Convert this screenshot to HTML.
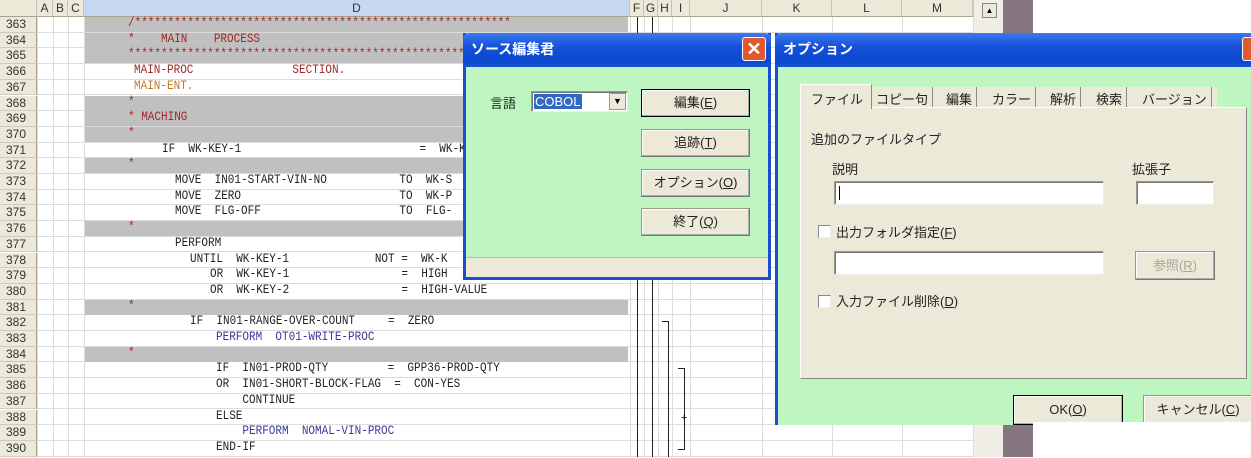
<!DOCTYPE html>
<html><head><meta charset="utf-8"><style>
*{margin:0;padding:0;box-sizing:border-box}
body{width:1251px;height:457px;overflow:hidden;background:#fff;position:relative;font-family:"Liberation Sans","Noto Sans CJK JP",sans-serif}
.a{position:absolute}
.hd{background:#ece9d8;border-right:1px solid #c8c4b4;border-bottom:1px solid #a8a490;font-size:12px;color:#333;text-align:center;line-height:17px;height:17px;top:0}
.rn{left:0;width:37px;background:#ece9d8;border-right:1px solid #a8a490;border-bottom:1px solid #d0ccbc;font-size:12px;color:#333;padding-left:6px;height:15.7px;line-height:15px}
.cell{border-bottom:1px solid #dcdcdc;height:15.7px}
.code{font-family:"Liberation Mono",monospace;font-size:11px;line-height:15px;white-space:pre;color:#222;height:15.7px;transform:scaleY(1.15);transform-origin:left center}
.r{color:#a02828}.o{color:#c07a2a}.b{color:#3a3a9a}
.vl{width:1px;background:#222}
.dlg{background:#bff5c0;border:3px solid #1b4fcf;border-top:none}
.tb{background:linear-gradient(#3b7bf0,#1550d8 40%,#0a48d0 85%,#1a55d0);color:#fff;font-weight:bold;font-size:14px;line-height:32px;padding-left:8px;font-family:"Liberation Sans","Noto Sans CJK JP",sans-serif}
.btn{background:#ece9d8;border:1px solid #9a9888;border-right-color:#777;border-bottom-color:#777;box-shadow:inset -1px -1px #aaa,inset 1px 1px #fff;font-size:13px;text-align:center;color:#222}
.inp{background:#fff;border:1px solid #9a9888;border-right-color:#eee;border-bottom-color:#eee;box-shadow:inset 1px 1px #777}
.t{font-size:13px;color:#222;white-space:nowrap}
.cb{width:13px;height:13px;background:#fff;border:1px solid #888;border-right-color:#eee;border-bottom-color:#eee}
</style></head><body>
<div class="a hd" style="left:0;width:37px"></div>
<div class="a hd" style="left:37px;width:16px">A</div>
<div class="a hd" style="left:53px;width:15px">B</div>
<div class="a hd" style="left:68px;width:16px">C</div>
<div class="a hd" style="left:84px;width:546px;background:#c6d7f0">D</div>
<div class="a hd" style="left:630px;width:14px">F</div>
<div class="a hd" style="left:644px;width:14px">G</div>
<div class="a hd" style="left:658px;width:14px">H</div>
<div class="a hd" style="left:672px;width:18px">I</div>
<div class="a hd" style="left:690px;width:72px">J</div>
<div class="a hd" style="left:762px;width:70px">K</div>
<div class="a hd" style="left:832px;width:70px">L</div>
<div class="a hd" style="left:902px;width:71px">M</div>
<div class="a" style="left:973px;top:0;width:30px;height:457px;background:#f0eee6;border-left:1px solid #ccc"></div>
<div class="a" style="left:982px;top:3px;width:15px;height:15px;background:#ece9d8;border:1px solid #888;font-size:8px;text-align:center;line-height:13px">▲</div>
<div class="a" style="left:1003px;top:0;width:30px;height:457px;background:#857680"></div>
<div id="grid"></div>
<script>
var rows=[
[363,1,'<span class="r">/*********************************************************</span>',128],
[364,1,'<span class="r">*    MAIN    PROCESS</span>',128],
[365,1,'<span class="r">**********************************************************</span>',128],
[366,0,'<span class="r">MAIN-PROC               SECTION.</span>',134],
[367,0,'<span class="o">MAIN-ENT.</span>',134],
[368,1,'<span class="r">*</span>',128],
[369,1,'<span class="r">* MACHING</span>',128],
[370,1,'<span class="r">*</span>',128],
[371,0,'IF  WK-KEY-1                           =  WK-K',162],
[372,1,'<span class="r">*</span>',128],
[373,0,'MOVE  IN01-START-VIN-NO           TO  WK-S',175],
[374,0,'MOVE  ZERO                        TO  WK-P',175],
[375,0,'MOVE  FLG-OFF                     TO  FLG-',175],
[376,1,'<span class="r">*</span>',128],
[377,0,'PERFORM',175],
[378,0,'UNTIL  WK-KEY-1             NOT =  WK-K',190],
[379,0,'OR  WK-KEY-1                 =  HIGH',210],
[380,0,'OR  WK-KEY-2                 =  HIGH-VALUE',210],
[381,1,'<span class="r">*</span>',128],
[382,0,'IF  IN01-RANGE-OVER-COUNT     =  ZERO',190],
[383,0,'<span class="b">PERFORM  OT01-WRITE-PROC</span>',216],
[384,1,'<span class="r">*</span>',128],
[385,0,'IF  IN01-PROD-QTY         =  GPP36-PROD-QTY',216],
[386,0,'OR  IN01-SHORT-BLOCK-FLAG  =  CON-YES',216],
[387,0,'    CONTINUE',216],
[388,0,'ELSE',216],
[389,0,'    <span class="b">PERFORM  NOMAL-VIN-PROC</span>',216],
[390,0,'END-IF',216]];
var h='';var cols=[37,53,68,84,630,644,658,672,690,762,832,902,973];
for(var i=0;i<rows.length;i++){var y=17+i*15.7;var r=rows[i];
h+='<div class="a rn" style="top:'+y+'px">'+r[0]+'</div>';
h+='<div class="a cell" style="left:37px;width:936px;top:'+y+'px"></div>';
if(r[1])h+='<div class="a" style="left:84px;width:544px;height:15px;background:#c0c0c0;top:'+y+'px"></div>';
h+='<div class="a code" style="left:'+r[3]+'px;top:'+y+'px">'+r[2]+'</div>';}
for(var j=0;j<cols.length;j++)h+='<div class="a" style="left:'+cols[j]+'px;top:17px;width:1px;height:440px;background:#dcdcdc"></div>';
h+='<div class="a vl" style="left:637px;top:17px;height:440px"></div>';
h+='<div class="a vl" style="left:652px;top:17px;height:440px"></div>';
var y382=17+19*15.7+6,y385=17+22*15.7+6,y390=17+27*15.7+9;
h+='<div class="a" style="left:662px;top:'+y382+'px;width:7px;height:'+(457-y382)+'px;border-top:1px solid #222;border-right:1px solid #222"></div>';
h+='<div class="a" style="left:678px;top:'+y385+'px;width:7px;height:'+(y390-y385)+'px;border-top:1px solid #222;border-right:1px solid #222;border-bottom:1px solid #222"></div>';
h+='<div class="a" style="left:681px;top:'+(17+25*15.7+2)+'px;font-size:11px">+</div>';
document.getElementById('grid').innerHTML=h;
</script>
<div class="a dlg" style="left:463px;top:33px;width:308px;height:247px">
 <div class="tb" style="margin:0 -3px;height:34px;border-radius:6px 6px 0 0">ソース編集君</div>
 <div class="a" style="right:2px;top:4px;width:24px;height:24px;background:#e05a30;border:1px solid #fff;border-radius:3px;color:#fff;font-size:18px;text-align:center;line-height:22px;font-weight:bold">✕</div>
 <div class="a t" style="left:24px;top:60px">言語</div>
 <div class="a inp" style="left:65px;top:58px;width:97px;height:21px"><span style="position:absolute;left:2px;top:2px;background:#316ac5;color:#fff;font-size:13px;line-height:15px;padding:0 1px">COBOL</span><span style="position:absolute;right:1px;top:1px;width:17px;height:17px;background:#ece9d8;border:1px solid #999;font-size:9px;text-align:center;line-height:15px">▼</span></div>
 <div class="a btn" style="left:175px;top:56px;width:109px;height:28px;line-height:26px;border:1px solid #000">編集(<u>E</u>)</div>
 <div class="a btn" style="left:175px;top:96px;width:109px;height:28px;line-height:26px">追跡(<u>T</u>)</div>
 <div class="a btn" style="left:175px;top:136px;width:109px;height:28px;line-height:26px">オプション(<u>O</u>)</div>
 <div class="a btn" style="left:175px;top:175px;width:109px;height:28px;line-height:26px">終了(<u>Q</u>)</div>
 <div class="a" style="left:0;right:0;bottom:0;height:20px;background:#ece9d8;border-top:1px solid #bbb"></div>
</div>
<div class="a dlg" style="left:775px;top:33px;width:480px;height:392px;border-bottom:none">
 <div class="tb" style="margin:0 -3px;height:34px;border-radius:6px 6px 0 0">オプション</div>
 <div class="a" style="right:-8px;top:4px;width:18px;height:24px;background:#e05a30;border:1px solid #fff;border-radius:3px"></div>
 <div class="a" style="left:22px;top:74px;width:447px;height:272px;background:#ece9d8;border:1px solid #fff;border-right-color:#888;border-bottom-color:#888"></div>
 <div class="a" style="left:94px;top:54px;width:345px;height:20px;background:#ece9d8"></div>
 <div class="a t" style="left:22px;top:51px;width:72px;height:25px;background:#ece9d8;border:1px solid #fff;border-bottom:none;border-right:1px solid #888;padding:4px 0 0 10px">ファイル</div>
 <div class="a t" style="left:94px;top:54px;height:20px;padding:2px 4px;border-right:1px solid #888">コピー句</div>
 <div class="a t" style="left:164px;top:54px;height:20px;padding:2px 4px;border-right:1px solid #888">編集</div>
 <div class="a t" style="left:210px;top:54px;height:20px;padding:2px 4px;border-right:1px solid #888">カラー</div>
 <div class="a t" style="left:268px;top:54px;height:20px;padding:2px 4px;border-right:1px solid #888">解析</div>
 <div class="a t" style="left:314px;top:54px;height:20px;padding:2px 4px;border-right:1px solid #888">検索</div>
 <div class="a t" style="left:360px;top:54px;height:20px;padding:2px 4px;border-right:1px solid #888">バージョン</div>
 <div class="a t" style="left:33px;top:96px">追加のファイルタイプ</div>
 <div class="a t" style="left:54px;top:126px">説明</div>
 <div class="a t" style="left:354px;top:126px">拡張子</div>
 <div class="a inp" style="left:56px;top:148px;width:270px;height:24px"><span style="position:absolute;left:4px;top:4px;width:1px;height:14px;background:#000"></span></div>
 <div class="a inp" style="left:358px;top:148px;width:78px;height:24px"></div>
 <div class="a cb" style="left:40px;top:192px"></div>
 <div class="a t" style="left:58px;top:189px">出力フォルダ指定(<u>F</u>)</div>
 <div class="a inp" style="left:56px;top:218px;width:270px;height:24px"></div>
 <div class="a btn" style="left:357px;top:218px;width:80px;height:29px;line-height:27px;color:#a8a898">参照(<u>R</u>)</div>
 <div class="a cb" style="left:40px;top:262px"></div>
 <div class="a t" style="left:58px;top:258px">入力ファイル削除(<u>D</u>)</div>
 <div class="a btn" style="left:235px;top:362px;width:110px;height:30px;line-height:28px;border:1px solid #000">OK(<u>O</u>)</div>
 <div class="a btn" style="left:365px;top:362px;width:110px;height:30px;line-height:28px">キャンセル(<u>C</u>)</div>
</div>
<div class="a" style="left:1033px;top:422px;width:218px;height:35px;background:#fff"></div>
<div class="a" style="left:1033px;top:0;width:218px;height:33px;background:#fff"></div>
</body></html>
